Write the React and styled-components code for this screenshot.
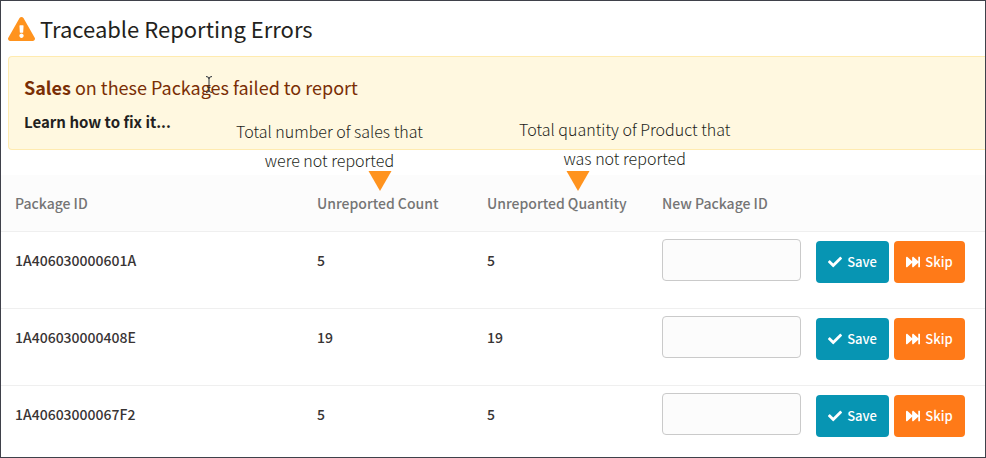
import React from "react";
import styled, { createGlobalStyle } from "styled-components";
import { FaExclamationTriangle, FaCheck, FaFastForward } from "react-icons/fa";

const GlobalStyle = createGlobalStyle`
  *, *::before, *::after { box-sizing: border-box; }
  body {
    margin: 0;
    background: #ffffff;
    color: #231f20;
    font-family: "Noto Sans CJK SC", "Noto Sans", sans-serif;
    font-size: 14px;
  }
`;

const Frame = styled.main`
  min-height: 100vh;
  border: 1px solid #3f414a;
  overflow: hidden;
`;

const PageHeader = styled.header`
  display: flex;
  align-items: center;
  gap: 5px;
  height: 55px;
`;

const WarningIcon = styled(FaExclamationTriangle)`
  width: 27px;
  height: 24px;
  margin-left: 7px;
  color: #ff931e;
`;

const Title = styled.h1`
  margin: 0;
  padding-bottom: 2px;
  font-size: 22px;
  font-weight: 400;
  line-height: 32px;
`;

const Banner = styled.section`
  height: 94px;
  margin-left: 7px;
  padding: 14px 15px;
  border: 1px solid #ffebb0;
  border-right: 0;
  border-radius: 4px 0 0 4px;
  background: #fff8e0;
`;

const BannerTitle = styled.h2`
  position: relative;
  margin: 0;
  color: #7a2e05;
  font-size: 18px;
  font-weight: 400;
  line-height: 32px;
`;

const HelpLink = styled.a`
  display: inline-block;
  color: #231f20;
  font-size: 15px;
  font-weight: 700;
  line-height: 37px;
  text-decoration: none;
`;

const TextCursor = styled.svg`
  position: absolute;
  left: 181px;
  top: 5px;
`;

const Table = styled.table`
  width: 100%;
  margin-top: 25px;
  table-layout: fixed;
  border-collapse: separate;
  border-spacing: 0;
`;

const Column = styled.col`
  width: ${({ $width }) => $width};
`;

const HeadCell = styled.th`
  position: relative;
  height: 57px;
  padding: 0 0 0 14px;
  border-bottom: 1px solid #efefef;
  background: #fcfcfc;
  color: #757575;
  font-size: 14px;
  font-weight: 500;
  line-height: 24px;
  text-align: left;
  white-space: nowrap;
`;

const Cell = styled.td`
  height: 77px;
  padding: ${({ $top }) => $top} 0 0 14px;
  border-bottom: 1px solid #efefef;
  color: #383434;
  font-size: 14px;
  font-weight: 500;
  line-height: 24px;
  vertical-align: top;
  white-space: nowrap;

  tr:last-child > & {
    height: 71px;
    border-bottom: 0;
  }
`;

const Callout = styled.div`
  position: absolute;
  left: ${({ $left }) => $left};
  bottom: 40px;
  color: #231f20;
  font-size: 16px;
  font-weight: 300;
  line-height: 29px;
  text-align: center;
`;

const Pointer = styled.svg`
  display: block;
  margin-top: ${({ $gap }) => $gap};
  margin-left: ${({ $shift }) => $shift};
`;

const PackageInput = styled.input`
  display: block;
  width: 139px;
  height: 42px;
  padding: 0 10px;
  border: 1px solid #cacaca;
  border-radius: 4px;
  background: #fcfcfc;
  font: inherit;
`;

const Actions = styled.div`
  display: flex;
  gap: 5px;
  padding-left: 1px;
`;

const ActionButton = styled.button`
  display: flex;
  align-items: center;
  justify-content: center;
  gap: 5px;
  width: ${({ $width }) => $width};
  height: 42px;
  padding: 0;
  border: 0;
  border-radius: 4px;
  background: ${({ $color }) => $color};
  color: #ffffff;
  font: 500 13px/20px "Noto Sans CJK SC", "Noto Sans", sans-serif;
  cursor: pointer;

  svg { width: 14px; height: 14px; }
`;

const rows = [
  { id: "1A406030000601A", count: 5, quantity: 5 },
  { id: "1A406030000408E", count: 19, quantity: 19 },
  { id: "1A40603000067F2", count: 5, quantity: 5 },
];

function Note({ left, shift, gap, lines }) {
  return (
    <Callout $left={left}>
      {lines[0]}
      <br />
      {lines[1]}
      <Pointer $shift={shift} $gap={gap} width="24" height="20" viewBox="0 0 24 20" aria-hidden="true">
        <path d="M0.5 0H23.5L12 20Z" fill="#ff931e" />
      </Pointer>
    </Callout>
  );
}

export default function App() {
  return (
    <>
      <GlobalStyle />
      <Frame>
        <PageHeader>
          <WarningIcon aria-hidden="true" />
          <Title>Traceable Reporting Errors</Title>
        </PageHeader>
        <Banner>
          <BannerTitle>
            <strong>Sales</strong> on these Packages failed to report
            <TextCursor width="8" height="17" viewBox="0 0 8 17" fill="none" stroke="#2b3038" aria-hidden="true">
              <path d="M1 0.5Q4 0.5 4 3V14Q4 16.5 1 16.5M7 0.5Q4 0.5 4 3M4 14Q4 16.5 7 16.5M2.5 11.5H5.5" />
            </TextCursor>
          </BannerTitle>
          <HelpLink href="#fix">Learn how to fix it...</HelpLink>
        </Banner>
        <Table>
          <colgroup>
            <Column />
            <Column $width="170px" />
            <Column $width="175px" />
            <Column $width="153px" />
            <Column $width="184px" />
          </colgroup>
          <thead>
            <tr>
              <HeadCell scope="col">Package ID</HeadCell>
              <HeadCell scope="col">
                Unreported Count
                <Note left="-67px" shift="132px" gap="-4px" lines={["Total number of sales that", "were not reported"]} />
              </HeadCell>
              <HeadCell scope="col">
                Unreported Quantity
                <Note left="46px" shift="47px" gap="-2px" lines={["Total quantity of Product that", "was not reported"]} />
              </HeadCell>
              <HeadCell scope="col">New Package ID</HeadCell>
              <HeadCell aria-label="Actions" />
            </tr>
          </thead>
          <tbody>
            {rows.map((row) => (
              <tr key={row.id}>
                <Cell $top="16px">{row.id}</Cell>
                <Cell $top="16px">{row.count}</Cell>
                <Cell $top="16px">{row.quantity}</Cell>
                <Cell $top="7px">
                  <PackageInput type="text" aria-label={`New Package ID for ${row.id}`} />
                </Cell>
                <Cell $top="9px">
                  <Actions>
                    <ActionButton type="button" $width="73px" $color="#0795b3">
                      <FaCheck aria-hidden="true" />
                      Save
                    </ActionButton>
                    <ActionButton type="button" $width="71px" $color="#ff7a18">
                      <FaFastForward aria-hidden="true" />
                      Skip
                    </ActionButton>
                  </Actions>
                </Cell>
              </tr>
            ))}
          </tbody>
        </Table>
      </Frame>
    </>
  );
}
